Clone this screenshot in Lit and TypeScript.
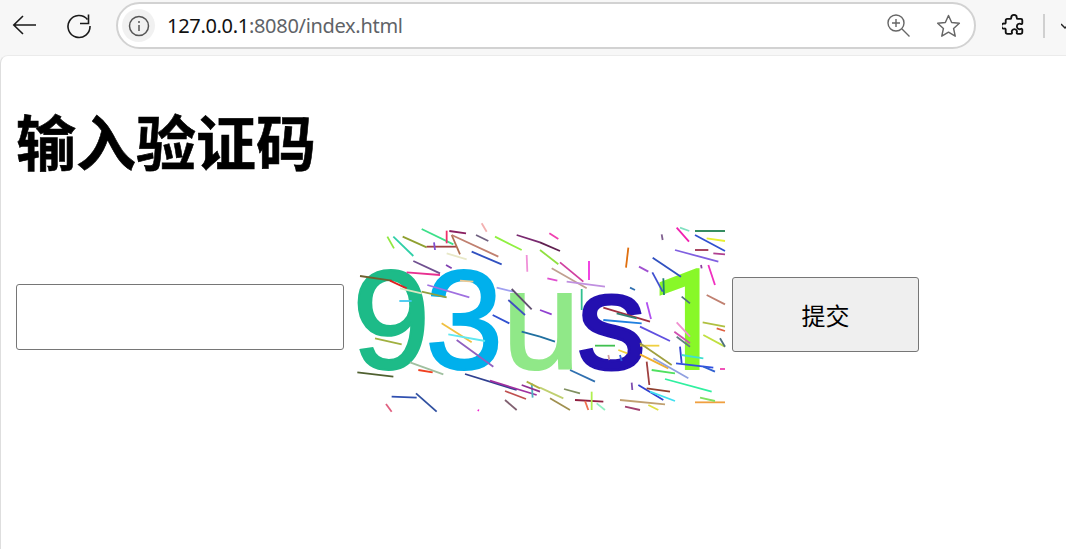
import { LitElement, html, css, svg } from "lit";
import { customElement } from "lit/decorators.js";

type L = [number, number, number, number, string];
const A: L[] = [
[215,42,310,88,"#3de08a"],[290,47,290,85,"#f0306a"],[298,48,348,55,"#8a2060"],[395,25,410,50,"#f3b0b0"],[378,60,415,78,"#706080"],
[435,65,515,105,"#90f040"],[500,60,570,82,"#7a2a70"],[112,65,132,100,"#90e840"],[130,65,190,123,"#30d0a8"],[158,65,230,97,"#90a030"],
[230,95,320,95,"#a04040"],[252,82,255,105,"#8050d0"],[305,60,330,118,"#b07050"],[305,60,445,125,"#c08070"],[365,110,455,148,"#3050c0"],
[290,115,350,133,"#e8e8c8"],[530,120,532,170,"#f090d8"],[190,138,270,175,"#705090"],[288,150,305,160,"#8040b0"],[170,172,270,180,"#e83090"],
[30,183,125,197,"#706030"],[120,197,170,220,"#e02020"],[150,220,215,235,"#d8e8c0"],[215,230,290,247,"#90a040"],[232,210,358,247,"#a070e0"],
[330,197,370,200,"#f0c890"],[440,218,490,230,"#a0a0f0"],[485,222,545,283,"#605070"],[475,255,525,300,"#4050c0"],[148,258,185,258,"#40c8f0"],
[428,300,478,325,"#3050d0"],[275,325,365,382,"#f0c040"],[295,358,405,378,"#60e8f0"],[75,370,155,388,"#a0b040"],[320,375,430,455,"#9060c0"],
[180,442,280,478,"#a0c0a0"],[205,465,248,472,"#f04020"],[22,472,130,485,"#506030"],[345,477,500,525,"#304090"],[420,497,560,540,"#a030a0"],
[545,505,548,548,"#50b0c0"],[465,528,528,552,"#c05050"],[465,555,500,585,"#806070"],[125,545,200,548,"#3050b0"],[198,535,260,590,"#3050a0"],
[108,567,125,590,"#e06080"],[530,500,570,520,"#b0b040"],[515,510,570,530,"#903090"],[383,585,387,587,"#f020d0"],[515,350,570,365,"#2070a0"],
];
const B: L[] = [
[28,55,55,72,"#f040b0"],[0,82,60,108,"#602050"],[0,105,55,148,"#90e040"],[60,142,130,200,"#d040a0"],[147,138,147,195,"#f030e0"],
[35,160,140,220,"#c0a090"],[22,190,52,197,"#e050d0"],[80,200,195,215,"#c090e0"],[125,222,125,285,"#30c090"],[0,285,35,298,"#9040d0"],
[265,98,258,158,"#e07010"],[365,58,368,75,"#806090"],[410,38,447,80,"#f020b0"],[420,38,448,48,"#80e0c0"],[465,48,555,48,"#208050"],
[500,70,555,78,"#e8f030"],[465,60,555,108,"#3050d0"],[405,105,535,140,"#8060e0"],[465,105,505,105,"#a03050"],[520,115,555,118,"#b04090"],
[338,128,423,185,"#3050c0"],[297,155,325,170,"#a050d0"],[337,172,368,230,"#4050d0"],[505,150,525,210,"#f030c0"],[370,190,372,240,"#208070"],
[483,150,485,160,"#9040a0"],[270,218,285,225,"#3070b0"],[425,245,450,265,"#507080"],[500,240,555,268,"#c08070"],[320,262,333,312,"#b050f0"],
[190,278,330,320,"#a03040"],[190,315,305,325,"#2080e0"],[230,295,290,310,"#308070"],[300,335,390,378,"#6050e0"],[488,322,555,335,"#b0c040"],
[530,340,555,348,"#e06040"],[410,322,450,365,"#f090d0"],[403,350,450,385,"#d050b0"],[410,365,450,395,"#608080"],[490,360,555,395,"#c0e040"],
[540,370,555,395,"#507080"],[0,365,45,380,"#2070a0"],[165,392,225,392,"#40c050"],[300,392,358,392,"#f0d040"],[300,385,395,450,"#a0a040"],
[235,405,262,415,"#f0d040"],[300,418,385,460,"#f0b030"],[340,430,445,490,"#90a0e0"],[420,395,425,445,"#3040d0"],[425,420,490,430,"#40e0d0"],
[408,445,520,458,"#3050e0"],[490,455,525,470,"#3060d0"],[540,462,555,462,"#f040b0"],[320,440,328,510,"#a04040"],[335,465,405,475,"#50e060"],
[375,492,515,530,"#30f0a0"],[275,503,277,525,"#8050b0"],[295,510,370,555,"#3040d0"],[320,520,390,530,"#904030"],[330,530,405,558,"#40e0f0"],
[90,465,165,500,"#3070b0"],[0,518,70,550,"#c0d070"],[72,522,120,535,"#809060"],[30,550,90,585,"#a09050"],[105,555,190,560,"#902040"],
[135,558,145,585,"#f07050"],[155,530,155,585,"#b0f050"],[170,565,195,585,"#90f0c0"],[240,555,375,568,"#c0a070"],[255,575,300,585,"#a04070"],
[325,570,355,585,"#e0e040"],[465,562,555,562,"#f0a040"],[480,548,525,558,"#80e060"],[205,420,208,435,"#d0a0a0"],[240,420,245,438,"#3060e0"],
];
const GLYPHS: [string, number, string, string][] = [
  ["9", 352, "#1dbb88", "g"], ["3", 425, "#00b0ec", "g"], ["u", 502, "#90e888", "g"], ["s", 577, "#2410b0", "g s"], ["1", 649, "#88f828", "g one"],
];
const seg = (l: L, ox: number) =>
  svg`<line x1=${ox + l[0] / 3} y1=${215 + l[1] / 3} x2=${ox + l[2] / 3} y2=${215 + l[3] / 3} stroke=${l[4]} stroke-width="1.8"></line>`;

@customElement("app-root")
export class AppRoot extends LitElement {
  static styles = css`
    :host { display: block; width: 1066px; height: 549px; overflow: hidden; background: #f7f7f7; font-family: "Liberation Sans", "Noto Sans CJK SC", sans-serif; }
    .bar { height: 55px; display: flex; align-items: flex-start; box-sizing: border-box; padding-top: 2px; }
    .icon { display: block; flex: none; }
    .back { margin: 11px 0 0 11px; }
    .reload { margin: 11px 0 0 27px; }
    .omni { flex: none; margin-left: 24px; width: 860px; height: 47px; box-sizing: border-box; border: 2px solid #d2d2d2; border-radius: 24px; background: #fff; display: flex; align-items: center; padding-left: 4px; }
    .info { width: 33px; height: 33px; border-radius: 50%; background: #f1f1f1; display: flex; align-items: center; justify-content: center; flex: none; }
    .url { margin-left: 12px; font: 20px "Noto Sans", sans-serif; letter-spacing: -0.31px; color: #5f6368; white-space: nowrap; flex: 1; }
    .url b { font-weight: 400; color: #111; }
    .zoom { margin-right: 26px; }
    .star { margin-right: 13px; }
    .puzzle { margin: 11px 0 0 26px; }
    .div { flex: none; width: 2px; height: 24px; background: #d0d0d0; margin: 12px 0 0 17px; }
    .more { margin: 21px 0 0 16px; }
    .page { height: 494px; box-sizing: border-box; background: #fff; border-top: 1px solid #ebebeb; border-left: 1px solid #dedede; border-top-left-radius: 8px; padding-left: 15px; }
    h1 { margin: 0; padding-top: 44px; font-size: 60px; line-height: 80px; font-weight: 700; color: #000; font-family: "Noto Sans CJK SC", sans-serif; -webkit-text-stroke: 0.6px #000; }
    .row { display: flex; align-items: center; margin-top: 42px; height: 190px; }
    .input { flex: none; width: 328px; height: 66px; box-sizing: border-box; border: 1px solid #767676; border-radius: 3px; background: #fff; padding: 0; }
    .cap { flex: none; display: block; margin-left: 8px; filter: blur(0.4px); overflow: visible; }
    .g { font-family: "Liberation Sans", sans-serif; font-size: 141px; stroke-width: 2px; }
    .s { font-size: 138px; stroke-width: 3px; }
    .one { font-family: Roboto, sans-serif; font-size: 139px; stroke-width: 2px; }
    .btn { flex: none; width: 187px; height: 75px; margin: 0 0 5px 7px; box-sizing: border-box; border: 1px solid #767676; border-radius: 3px; background: #efefef; color: #000; font: 24px "Noto Sans CJK SC", sans-serif; padding: 0; }
  `;
  render() {
    return html`
      <div class="bar">
        <svg class="icon back" width="28" height="24" viewBox="0 0 28 24" fill="none" stroke="#1a1a1a" stroke-width="1.6"><path d="M25 12H3M12 3l-9.200 9 9.200 9"/></svg>
        <svg class="icon reload" width="26" height="26" viewBox="0 0 26 26" fill="none" stroke="#1a1a1a" stroke-width="1.6"><path d="M21.500 6.500A11 11 0 1 0 24 13"/><path d="M22.500 1.500v9h-8.500"/></svg>
        <div class="omni">
          <div class="info">
            <svg width="22" height="22" viewBox="0 0 22 22" fill="none" stroke="#555" stroke-width="1.5"><circle cx="11" cy="11" r="9.500"/><path d="M11 10v6M11 6v2"/></svg>
          </div>
          <div class="url"><b>127.0.0.1</b>:8080/index.html</div>
          <svg class="icon zoom" width="23" height="23" viewBox="0 0 23 23" fill="none" stroke="#666" stroke-width="1.4"><circle cx="9" cy="9" r="8"/><path d="M9 5v8M5 9h8M15 15l7.500 7.500"/></svg>
          <svg class="icon star" width="25" height="24" viewBox="0 0 26 25" fill="none" stroke="#666" stroke-width="1.5" stroke-linejoin="round"><path d="M13 1.500l3.300 7.400 8 .8-6 5.400 1.700 8L13 19 6 23.100l1.700-8-6-5.400 8-.8z"/></svg>
        </div>
        <svg class="icon puzzle" width="24" height="25" viewBox="0 0 26 26" fill="none" stroke="#111" stroke-width="2" stroke-linejoin="round"><path d="M10 4.500a3 3 0 0 1 6 0c0 .8 .4 1.400 1.200 1.400h3.300a1.500 1.500 0 0 1 1.500 1.500v3c0 .8-.7 1.200-1.400 1a3 3 0 1 0 0 5.200c.7-.2 1.400 .2 1.400 1v2.400a2 2 0 0 1-2 2h-3c-.8 0-1.200-.6-1-1.300a2.800 2.800 0 1 0-5.200 0c.2 .7-.2 1.300-1 1.300H6a2 2 0 0 1-2-2v-2.800c0-.7-.6-1.100-1.200-.9a2.800 2.800 0 1 1 0-5.400c.6 .2 1.200-.2 1.200-.9V7.400a1.500 1.500 0 0 1 1.500-1.500h3.300c.8 0 1.200-.6 1.200-1.400z"/></svg>
        <div class="div"></div>
        <svg class="icon more" width="8" height="8" viewBox="0 0 8 8" fill="none" stroke="#222" stroke-width="1.5"><path d="M0 1l4 4 4-4"/></svg>
      </div>
      <div class="page">
        <h1>输入验证码</h1>
        <div class="row">
          <input class="input" type="text" />
          <svg class="cap" width="373" height="190" viewBox="352 222 373 190">
            ${GLYPHS.map(([c, x, f, k]) => svg`<text class=${k} x=${x} y="369" fill=${f} stroke=${f}>${c}</text>`)}
            ${A.map((l) => seg(l, 350))}
            ${B.map((l) => seg(l, 540))}
          </svg>
          <button class="btn">提交</button>
        </div>
      </div>
    `;
  }
}
